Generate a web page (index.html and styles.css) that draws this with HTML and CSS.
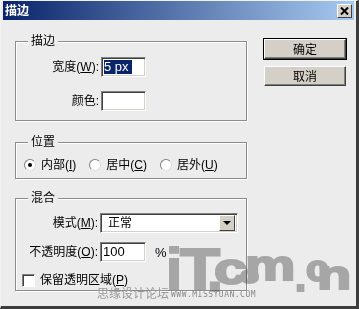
FILE: index.html
```html
<!DOCTYPE html>
<html lang="zh-CN">
<head>
  <meta charset="UTF-8" />
  <title>描边</title>
  <link rel="stylesheet" href="styles.css">
</head>
<body>

<div class="window">
  <div class="titlebar">
    <span class="title">描边</span>
    <span class="close">
      <svg width="9" height="8" viewBox="0 0 9 8"><path d="M1 0.5 L8 7.5 M8 0.5 L1 7.5" stroke="#000" stroke-width="2"/></svg>
    </span>
  </div>

  <div class="body">
    <div class="main">
      <div class="group g-stroke">
        <span class="legend">描边</span>
        <div class="form-row">
          <label class="lbl">宽度(<u>W</u>):</label>
          <div class="field small"><span class="sel">5 px</span></div>
        </div>
        <div class="form-row row-color">
          <label class="lbl">颜色:</label>
          <div class="field small"></div>
        </div>
      </div>

      <div class="group g-pos">
        <span class="legend">位置</span>
        <div class="radios">
          <span class="radio-item"><span class="radio checked"></span><span>内部(<u>I</u>)</span></span>
          <span class="radio-item"><span class="radio"></span><span>居中(<u>C</u>)</span></span>
          <span class="radio-item"><span class="radio"></span><span>居外(<u>U</u>)</span></span>
        </div>
      </div>

      <div class="group g-blend">
        <span class="legend">混合</span>
        <div class="form-row">
          <label class="lbl">模式(<u>M</u>):</label>
          <div class="select">
            <span class="select-text">正常</span>
            <span class="select-btn"><span class="arrow"></span></span>
          </div>
        </div>
        <div class="form-row row-opacity">
          <label class="lbl">不透明度(<u>O</u>):</label>
          <div class="field small"><span class="val">100</span></div>
          <span class="pct">%</span>
        </div>
        <div class="check-row">
          <span class="checkbox"></span><span>保留透明区域(<u>P</u>)</span>
        </div>
      </div>
    </div>

    <div class="side">
      <button class="btn default" type="button">确定</button>
      <button class="btn" type="button">取消</button>
    </div>
  </div>

  <!-- watermark logo, letters placed freely -->
  <div class="logo">
    <span class="l-i">i</span>
    <span class="l-t">T</span>
    <span class="l-dot">.</span>
    <span class="l-c">c</span>
    <span class="l-o">o</span>
    <span class="l-m">m</span>
    <span class="l-dot2">.</span>
    <span class="l-c2">c</span>
    <span class="l-n">n</span>
  </div>
  <div class="wm-cn">思缘设计论坛</div>
  <div class="wm-url">WWW.MISSYUAN.COM</div>
</div>

</body>
</html>
```

FILE: styles.css
```css
* { box-sizing: border-box; margin: 0; padding: 0; }

body {
  font-family: "Liberation Sans", "Noto Sans CJK SC", sans-serif;
  font-size: 12px;
  color: #000;
  background: #fff;
}

.window {
  position: relative;
  width: 359px;
  height: 309px;
  background: #ececec;
  border-style: solid;
  border-width: 1px 3px 3px 1px;
  border-color: #f2f2f2 #3c3c3c #3c3c3c #f2f2f2;
  padding: 0 2px;
  overflow: hidden;
}

.titlebar {
  height: 19px;
  background: linear-gradient(to right, #0a246a, #a6caf0);
  display: flex;
  align-items: center;
  justify-content: space-between;
  padding: 0 2px 0 2px;
}

.title {
  color: #fff;
  font-weight: bold;
  line-height: 14px;
}

.close {
  width: 15px;
  height: 14px;
  background: #d4d0c8;
  border: 1px solid;
  border-color: #fff #404040 #404040 #fff;
  display: flex;
  align-items: center;
  justify-content: center;
}

.body {
  display: flex;
  gap: 16px;
  padding-left: 12px;
}

.main {
  padding-top: 21px;
  width: 232px;
}

/* group boxes */
.group {
  position: relative;
  border: 1px solid #8c8c8c;
  box-shadow: inset 1px 1px 0 #fff, 1px 1px 0 #fff;
}

.legend {
  position: absolute;
  top: -8px;
  left: 12px;
  padding: 0 3px;
  background: #ececec;
  line-height: 14px;
}

.g-stroke { height: 80px; padding-top: 15px; }
.g-pos { height: 37px; margin-top: 21px; padding: 15px 0 0 8px; }
.g-blend { height: 93px; margin-top: 19px; padding-top: 14px; }

.form-row {
  display: flex;
  align-items: center;
  height: 20px;
}

.row-color { margin-top: 14px; }
.row-opacity { margin-top: 9px; }

.lbl {
  width: 85px;
  flex-shrink: 0;
  text-align: right;
  padding-right: 2px;
  line-height: 14px;
}

.g-blend .lbl { width: 84px; }

.field {
  background: #fff;
  border: 1px solid;
  border-color: #808080 #fff #fff #808080;
  box-shadow: inset 1px 1px 0 #404040, inset -1px -1px 0 #d4d0c8;
  height: 20px;
  width: 45px;
  padding: 2px 0 0 2px;
  line-height: 14px;
  font-size: 13px;
}

.g-blend .field { width: 46px; }

.sel {
  display: inline-block;
  background: #0a246a;
  color: #fff;
  padding: 0 3px 0 0;
}

.pct {
  margin-left: 9px;
  font-size: 13px;
}

/* select */
.select {
  width: 138px;
  height: 20px;
  background: #fff;
  border: 1px solid;
  border-color: #808080 #fff #fff #808080;
  box-shadow: inset 1px 1px 0 #404040, inset -1px -1px 0 #d4d0c8;
  display: flex;
  align-items: center;
  padding: 2px;
}

.select-text {
  flex: 1;
  padding-left: 5px;
  line-height: 14px;
}

.select-btn {
  width: 16px;
  height: 16px;
  background: #d4d0c8;
  border: 1px solid;
  border-color: #fff #404040 #404040 #fff;
  display: flex;
  align-items: center;
  justify-content: center;
}

.arrow {
  width: 0;
  height: 0;
  border-left: 4px solid transparent;
  border-right: 4px solid transparent;
  border-top: 4px solid #000;
}

/* radios */
.radios {
  display: flex;
  gap: 13px;
  line-height: 14px;
  white-space: nowrap;
}

.radio-item {
  display: flex;
  align-items: center;
  gap: 5px;
}

.radio {
  width: 12px;
  height: 12px;
  border-radius: 50%;
  background: #fff;
  border: 1px solid;
  border-color: #808080 #e0e0e0 #e0e0e0 #808080;
  display: flex;
  align-items: center;
  justify-content: center;
}

.radio.checked::after {
  content: "";
  width: 4px;
  height: 4px;
  border-radius: 50%;
  background: #000;
}

/* checkbox */
.check-row {
  display: flex;
  align-items: center;
  gap: 5px;
  margin-top: 11px;
  padding-left: 6px;
  line-height: 14px;
  white-space: nowrap;
}

.checkbox {
  width: 13px;
  height: 13px;
  background: #fff;
  border: 1px solid;
  border-color: #808080 #fff #fff #808080;
  box-shadow: inset 1px 1px 0 #404040;
}

/* buttons */
.side {
  padding-top: 18px;
  display: flex;
  flex-direction: column;
  gap: 5px;
}

.btn {
  width: 82px;
  height: 20px;
  margin: 1px;
  font-family: "Noto Sans CJK SC", sans-serif;
  font-size: 12px;
  background: #d4d0c8;
  border: 1px solid;
  border-color: #fff #404040 #404040 #fff;
  box-shadow: inset -1px -1px 0 #808080;
  line-height: 14px;
}

.btn.default {
  outline: 1px solid #000;
}

/* watermark */
.logo {
  position: absolute;
  left: 0;
  top: 0;
  width: 100%;
  height: 100%;
  font-family: "Liberation Sans", sans-serif;
  font-weight: bold;
  line-height: 1;
  color: #b4b4b4;
  -webkit-text-stroke: 2px #b4b4b4;
  mix-blend-mode: multiply;
  pointer-events: none;
}

.logo span {
  position: absolute;
  white-space: nowrap;
  transform-origin: left bottom;
}

.l-i    { left: 165px; top: 239px; font-size: 58px; }
.l-t    { left: 179px; top: 240px; font-size: 57px; transform: scaleX(1.15); }
.l-dot  { left: 206px; top: 242px; font-size: 57px; }
.l-c    { left: 213px; top: 246px; font-size: 44px; transform: scaleX(1.35); }
.l-o    { left: 239px; top: 262px; font-size: 24px; transform: scaleX(1.3); }
.l-m    { left: 244px; top: 244px; font-size: 42px; transform: scaleX(1.35); }
.l-dot2 { left: 294px; top: 256px; font-size: 40px; }
.l-c2   { left: 305px; top: 250px; font-size: 36px; transform: scaleX(1.13); }
.l-n    { left: 316px; top: 254px; font-size: 40px; transform: scaleX(1.4); }

.wm-cn {
  position: absolute;
  left: 96px;
  top: 286px;
  font-family: "Noto Sans CJK SC", sans-serif;
  font-size: 12px;
  line-height: 12px;
  color: #999;
}

.wm-url {
  position: absolute;
  left: 170px;
  top: 289px;
  font-family: "DejaVu Sans Mono", monospace;
  font-size: 8px;
  letter-spacing: 0.5px;
  line-height: 10px;
  color: #888;
}
```
